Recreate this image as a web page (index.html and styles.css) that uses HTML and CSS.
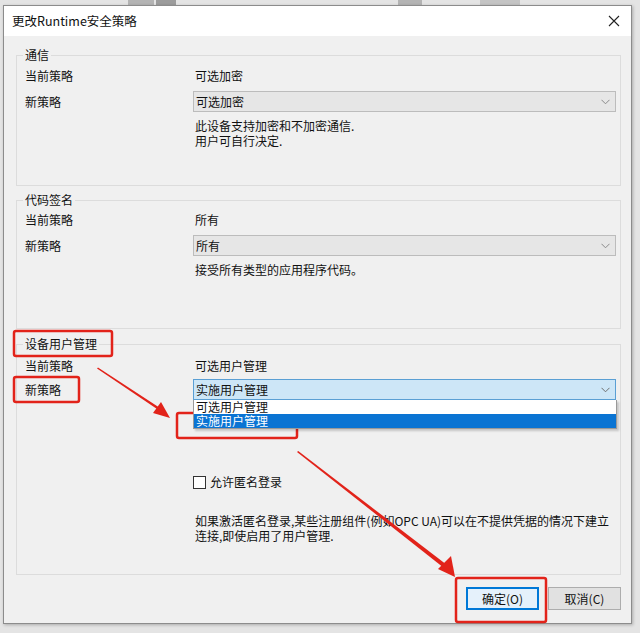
FILE: index.html
```html
<!DOCTYPE html>
<html lang="zh-CN">
<head>
<meta charset="utf-8">
<title>更改Runtime安全策略</title>
<link rel="stylesheet" href="styles.css">
</head>
<body>
<div class="backdrop">
  <span class="blk b1"></span><span class="blk b2"></span><span class="blk b3"></span><span class="blk b4"></span>
</div>
<div class="dialog">
  <div class="titlebar">
    <span class="title">更改Runtime安全策略</span>
    <svg class="close" width="12" height="12" viewBox="0 0 12 12"><path d="M1 1L11 11M11 1L1 11" stroke="#222" stroke-width="1.1" fill="none"/></svg>
  </div>
  <div class="content">
    <fieldset class="group g1">
      <legend>通信</legend>
      <div class="row r1"><span class="lbl">当前策略</span><span class="val">可选加密</span></div>
      <div class="row r2"><span class="lbl">新策略</span>
        <div class="combo"><span>可选加密</span><svg class="chev" width="9" height="6" viewBox="0 0 9 6"><path d="M0.5 0.8L4.5 4.8L8.5 0.8" stroke="#8a8a8a" stroke-width="1" fill="none"/></svg></div>
      </div>
      <div class="desc">此设备支持加密和不加密通信.<br>用户可自行决定.</div>
    </fieldset>

    <fieldset class="group g2">
      <legend>代码签名</legend>
      <div class="row r1"><span class="lbl">当前策略</span><span class="val">所有</span></div>
      <div class="row r2"><span class="lbl">新策略</span>
        <div class="combo"><span>所有</span><svg class="chev" width="9" height="6" viewBox="0 0 9 6"><path d="M0.5 0.8L4.5 4.8L8.5 0.8" stroke="#8a8a8a" stroke-width="1" fill="none"/></svg></div>
      </div>
      <div class="desc">接受所有类型的应用程序代码。</div>
    </fieldset>

    <fieldset class="group g3">
      <legend>设备用户管理</legend>
      <div class="row r1"><span class="lbl">当前策略</span><span class="val">可选用户管理</span></div>
      <div class="row r2"><span class="lbl">新策略</span>
        <div class="combo focused"><span>实施用户管理</span><svg class="chev" width="9" height="6" viewBox="0 0 9 6"><path d="M0.5 0.8L4.5 4.8L8.5 0.8" stroke="#6f6f6f" stroke-width="1" fill="none"/></svg>
          <div class="dropdown">
            <div class="opt">可选用户管理</div>
            <div class="opt sel">实施用户管理</div>
          </div>
        </div>
      </div>
      <div class="row r3"><span class="lbl"></span><label class="check"><span class="box"></span>允许匿名登录</label></div>
      <div class="desc d3">如果激活匿名登录,某些注册组件(例如OPC UA)可以在不提供凭据的情况下建立<br>连接,即使启用了用户管理.</div>
    </fieldset>

    <div class="buttons">
      <button class="btn primary">确定(O)</button>
      <button class="btn">取消(C)</button>
    </div>
  </div>
</div>

<svg class="annot" width="640" height="633" viewBox="0 0 640 633">
  <g fill="none" stroke="#e2231a" stroke-width="2.5">
    <rect x="14" y="331" width="98" height="25" rx="2"/>
    <rect x="14" y="377" width="65" height="25" rx="2"/>
    <rect x="177" y="413" width="120" height="25" rx="2"/>
    <rect x="456" y="578" width="90" height="44" rx="2"/>
  </g>
  <g fill="#e2231a" stroke="none">
    <polygon points="97,368.5 98,367.5 160,408 158.5,410"/>
    <polygon points="170,418 153,413 161,402"/>
    <polygon points="297,452 298.2,451 447,565 444,568"/>
    <polygon points="455,577 438,569 451,556"/>
  </g>
</svg>
</body>
</html>
```
FILE: styles.css
```css
html, body {
  margin: 0;
  padding: 0;
}
body {
  width: 640px;
  height: 633px;
  overflow: hidden;
  position: relative;
  background: #e4e4e4;
  font-family: "Noto Sans CJK SC", "Microsoft YaHei", sans-serif;
  font-size: 12px;
  color: #111;
}
.backdrop {
  position: absolute;
  left: 0;
  top: 0;
  width: 640px;
  height: 5px;
}
.blk {
  position: absolute;
  top: 0;
  height: 5px;
  background: #b4b4b4;
}
.b1 { left: 128px; width: 26px; }
.b2 { left: 156px; width: 20px; background: #9c9c9c; }
.b3 { left: 398px; width: 24px; }
.b4 { left: 480px; width: 40px; background: #c4c4c4; }
.dialog {
  position: relative;
  margin: 5px 0 0 3px;
  width: 629px;
  height: 619px;
  box-sizing: border-box;
  border: 1px solid #8c8c8c;
  background: #f0f0f0;
  box-shadow: 1px 1px 3px rgba(0,0,0,0.25);
  display: flex;
  flex-direction: column;
}
.titlebar {
  height: 30px;
  background: #ffffff;
  display: flex;
  align-items: center;
  justify-content: space-between;
  padding: 0 8px 0 8px;
  flex: none;
}
.title {
  font-size: 12.5px;
  line-height: 16px;
  color: #111;
}
.close {
  margin-right: 3px;
}
.content {
  padding: 11px 10px 0 12px;
  display: flex;
  flex-direction: column;
}
.group {
  margin: 0;
  border: 1px solid #dcdcdc;
  padding: 0 4px 0 8px;
  min-inline-size: 0;
}
.group legend {
  padding: 0 2px;
  margin-left: -2px;
  line-height: 16px;
  height: 16px;
}
.g2 {
  margin-top: 6px;
}
.g3 {
  margin-top: 7px;
}
.row {
  display: grid;
  grid-template-columns: 168px 1fr;
  align-items: center;
}
.row.r1 {
  height: 20px;
  margin-top: 3px;
}
.g2 .row.r1 {
  margin-top: 2px;
}
.g3 .row.r1 {
  margin-top: 4px;
}
.row.r2 {
  margin-top: 5px;
  height: 21px;
}
.g3 .row.r2 {
  margin-top: 3px;
}
.val {
  padding-left: 2px;
  line-height: 20px;
}
.lbl {
  line-height: 20px;
}
.combo {
  position: relative;
  height: 21px;
  box-sizing: border-box;
  border: 1px solid #bcbcbc;
  background: #e6e6e6;
  display: flex;
  align-items: center;
  justify-content: space-between;
  padding: 0 5px 0 2px;
  line-height: 19px;
}
.combo.focused {
  background: #cde6f7;
  border-color: #5a9fd4;
}
.dropdown {
  position: absolute;
  left: -1px;
  right: -2px;
  top: 20px;
  height: 28px;
  background: #fff;
  border: 1px solid #9a9a9a;
  border-top: none;
  box-shadow: 2px 2px 2px rgba(0,0,0,0.18);
  overflow: hidden;
  z-index: 2;
}
.opt {
  height: 14px;
  line-height: 14px;
  padding-left: 2px;
  overflow: hidden;
}
.opt.sel {
  background: #0a74d3;
  color: #fff;
}
.desc {
  padding-left: 170px;
  line-height: 15px;
  margin-top: 6px;
}
.g1 .desc {
  padding-bottom: 37px;
}
.g2 .desc {
  padding-bottom: 51px;
}
.row.r3 {
  margin-top: 72px;
  height: 20px;
}
.check {
  display: flex;
  align-items: center;
  gap: 4px;
  line-height: 20px;
}
.box {
  width: 11px;
  height: 11px;
  border: 1px solid #333;
  background: #fff;
  display: inline-block;
}
.desc.d3 {
  margin-top: 21px;
  padding-bottom: 31px;
}
.buttons {
  display: flex;
  justify-content: flex-end;
  gap: 9px;
  margin-top: 12px;
  padding-right: 0;
}
.btn {
  width: 73px;
  height: 23px;
  box-sizing: border-box;
  border: 1px solid #adadad;
  background: #e1e1e1;
  font-family: inherit;
  font-size: 12px;
  color: #111;
  padding: 0;
  line-height: 20px;
}
.btn.primary {
  border: 2px solid #0078d7;
  background: #e5f1fb;
}
.annot {
  position: absolute;
  left: 0;
  top: 0;
  pointer-events: none;
}
```
